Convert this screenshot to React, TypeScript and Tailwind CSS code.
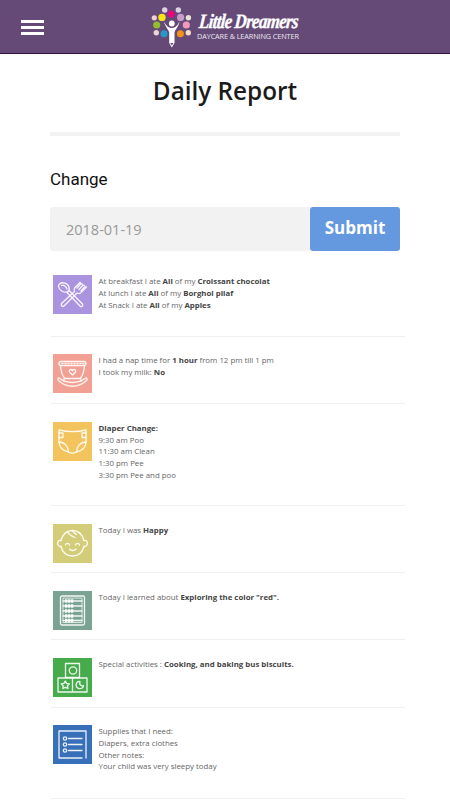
import type { ReactNode } from "react";

interface ReportRowProps {
  tile: string;
  height: string;
  icon: ReactNode;
  children: ReactNode;
}

function ReportRow({ tile, height, icon, children }: ReportRowProps) {
  return (
    <section
      className={`flex items-start gap-[6.5px] border-b border-[#f0f0f0] pl-[2px] pt-[17.5px] ${height}`}
    >
      <div className={`h-[39px] w-[39px] shrink-0 ${tile}`}>
        <svg
          viewBox="0 0 39 39"
          className="h-full w-full"
          fill="none"
          stroke="white"
          strokeOpacity="0.9"
          strokeWidth="1.3"
          strokeLinecap="round"
          strokeLinejoin="round"
        >
          {icon}
        </svg>
      </div>
      <div className="whitespace-nowrap pt-[1px] text-[7.85px] leading-[11.75px] text-[#666] [&_b]:font-bold [&_b]:text-[#444]">
        {children}
      </div>
    </section>
  );
}

function Logo() {
  return (
    <div className="flex text-white">
      <svg viewBox="0 0 50 53" className="h-[53px] w-[50px]" role="img">
        <circle cx="19.7" cy="10" r="2.7" fill="#dfd0e2" />
        <circle cx="33.3" cy="10" r="2.7" fill="#d9d4e0" />
        <circle cx="26.3" cy="14" r="3.6" fill="#e5097f" />
        <circle cx="17" cy="17.4" r="3.7" fill="#f9e414" />
        <circle cx="35.6" cy="17.4" r="3.6" fill="#c89bc8" />
        <circle cx="9.3" cy="17.8" r="2.6" fill="#f0cfd5" />
        <circle cx="43.4" cy="17.8" r="2.7" fill="#e8e4d3" />
        <circle cx="11.7" cy="25" r="3.6" fill="#93bd2b" />
        <circle cx="41.3" cy="25" r="3.6" fill="#f19abb" />
        <circle cx="11.3" cy="32.7" r="2.7" fill="#efd3d5" />
        <circle cx="19" cy="33.7" r="3.5" fill="#2799c9" />
        <circle cx="35.4" cy="33.7" r="3.5" fill="#f39313" />
        <circle cx="43.3" cy="32.7" r="2.7" fill="#f4dfc7" />
        <circle cx="26.8" cy="23.5" r="2.9" fill="white" />
        <path
          d="M19 21.5 C21 26 24 28 26.8 28 C29.5 28 32.5 26 34.5 21.5 C33.8 27 30 29.5 29.5 32.5 V43 L26.8 47.5 L24.2 43 V32.5 C23.7 29.5 20 27 19 21.5Z"
          fill="white"
        />
        <path d="M25.2 43 h3.3 l-1.7 2.5Z" fill="#654a78" />
      </svg>
      <div className="flex w-[106px] flex-col pl-[2px] pt-[13px]">
        <div className="flex h-[18px] origin-left -skew-x-6 scale-y-[1.2] items-center gap-[3px] whitespace-nowrap pl-[2px] font-['Liberation_Serif',serif] text-[17px] font-bold italic leading-[18px] tracking-[-0.7px] [-webkit-text-stroke:0.3px_white]">
          <span>Little</span>
          <span>Dreamers</span>
        </div>
        <div className="whitespace-nowrap font-['Open_Sans',sans-serif] text-[7.3px] leading-[10px] tracking-[-0.12px] text-[#eee8f2]">
          DAYCARE &amp; LEARNING CENTER
        </div>
      </div>
    </div>
  );
}

const cutlery = (
  <>
    <path d="M6.5 9 C9 6.5 15 8 16 12 C16.8 14.5 16 16 14.5 17 C10.5 18 6 15 5.5 11.5 C5.3 10.5 5.8 9.7 6.5 9Z" />
    <path d="M8.5 10.5 C10.5 9.5 13.5 11.5 14 14 M16 15.5 L29.5 29 C30.5 31 28.5 32.5 27 31 L14 17.5" />
    <path d="M27 7.5 L22 12.5 C20.8 14 21 15.5 21.5 16.5 L8.5 28.5 C7.5 30.5 9.5 32.5 11.5 30.5 L24 18 C26 19 27.5 18.5 28.5 17 L33.5 12" />
    <path d="M27 7.5 L28 8.5 L24 13 M29 9 L30 10 L26 14.5 M31 10.5 L32 11.5 L28 16" />
  </>
);

const cradle = (
  <>
    <rect x="6" y="7.5" width="27" height="4" rx="2" />
    <path d="M9 9.5 H31" strokeDasharray="1 2" />
    <path d="M7.5 12 C8 17 9 22 12 24.5 H27 C30 22 31 17 31.5 12" />
    <path d="M6 24 C4.5 24 4.5 26 6 27 C14 34 25 34 33 27 C34.5 26 34.5 24 33 24 C25 30 14 30 6 24Z" />
    <path d="M11 25 V27 M28 25 V27" />
    <path d="M19.5 21 L16.5 18 C15.5 15.5 18.5 14.5 19.5 16.8 C20.5 14.5 23.5 15.5 22.5 18Z" />
  </>
);

const diaper = (
  <>
    <path d="M6 8 C14 10 25 10 33 8 V20 C27 20 23.5 25 23.5 30 C21 31.5 18 31.5 15.5 30 C15.5 25 12 20 6 20Z" />
    <path d="M6 11 H10 V15.5 H6 M33 11 H29 V15.5 H33" />
    <path d="M6 20 C6.5 25 10 29 15.5 30 M33 20 C32.5 25 29 29 23.5 30" />
  </>
);

const baby = (
  <>
    <path d="M8 16.5 C10 9.5 14 6.5 19.5 6.5 C25 6.5 29 9.5 31 16.5 M8 22.5 C9.5 28.5 14 32 19.5 32 C25 32 29.5 28.5 31 22.5" />
    <path d="M8 16.5 C3.5 15.5 3.5 23 8 22.5 M31 16.5 C35.5 15.5 35.5 23 31 22.5" />
    <path d="M14.5 7.5 C15.5 10.5 18.5 12 22 13.5 M19.5 6.8 C20.5 9 21.5 9.5 23.5 10.3" />
    <path d="M12.5 21 C13 18.7 16 18.7 16.5 21 M22.5 21 C23 18.7 26 18.7 26.5 21 M16.5 25 C18 27 21.5 27 23 25" />
  </>
);

const abacus = (
  <>
    <rect x="7.5" y="5" width="24" height="29" rx="1.5" />
    <path d="M10 7.5 V31.5 H29 V7.5Z" strokeWidth="0.8" />
    <path d="M10 10 H29 M10 15 H29 M10 20 H29 M10 25 H29 M10 29.5 H29" />
    <path
      d="M12 10 H21 M12 15 H21 M12 20 H21 M12 25 H21 M12 29.5 H21"
      strokeWidth="3.4"
      strokeDasharray="2.3 0.7"
      strokeLinecap="butt"
    />
  </>
);

const blocks = (
  <>
    <rect x="12.5" y="5.5" width="14" height="14" />
    <path d="M5 20 H19.5 V34 H5Z M19.5 20 H34 V34 H19.5Z" />
    <circle cx="20" cy="12.5" r="3.7" />
    <path d="M12.3 23 L13.6 25.4 L16.4 25.8 L14.4 27.7 L14.9 30.5 L12.3 29.3 L9.8 30.5 L10.2 27.7 L8.2 25.8 L11 25.4Z" />
    <path d="M27 23.5 C22.5 23 21.7 29.5 26 30.5 C28.5 31 30.5 29.5 30.5 27.5 C28 28.5 26 26.5 27 23.5Z" />
  </>
);

const checklist = (
  <>
    <path d="M33 33.5 V6 H6 V33 H29.5" strokeLinecap="butt" />
    <circle cx="12" cy="13.5" r="1.7" />
    <circle cx="12" cy="19.5" r="1.7" />
    <circle cx="12" cy="25.5" r="1.7" />
    <path d="M15.5 13.5 H29 M15.5 19.5 H29 M15.5 25.5 H29" />
  </>
);

export default function App() {
  return (
    <div className="h-[800px] w-[450px] overflow-hidden bg-white font-['Open_Sans','Noto_Sans',sans-serif]">
      <header className="flex h-[54px] items-start border-b border-[#2f1245] bg-[#654a78]">
        <button
          type="button"
          aria-label="Menu"
          className="ml-[21px] mt-[20px] flex w-[23px] flex-col gap-[3px]"
        >
          <span className="h-[3px] bg-white" />
          <span className="h-[2.5px] bg-white" />
          <span className="h-[3px] bg-white" />
        </button>
        <div className="ml-[101px]">
          <Logo />
        </div>
      </header>

      <main>
        <div className="mx-[50px]">
          <h1 className="h-[82px] border-b-4 border-[#f2f2f2] pt-[20px] text-center text-[24.3px] font-semibold leading-[34px] text-[#1b1b1b]">
            Daily Report
          </h1>
          <label
            htmlFor="date"
            className="block pt-[31px] font-['Roboto',sans-serif] text-[17px] leading-[24px] text-[#111]"
          >
            Change
          </label>
          <form className="mt-[16px] flex h-[44px]">
            <input
              id="date"
              readOnly
              value="2018-01-19"
              className="w-[260px] rounded-l-[3px] bg-[#f2f2f2] pl-[16px] pt-[2px] text-[14.5px] text-[#999] outline-none"
            />
            <button
              type="button"
              className="w-[90px] rounded-[3px] bg-[#6499e0] pb-[3px] text-[17px] font-bold text-white"
            >
              Submit
            </button>
          </form>
        </div>

        <div className="ml-[51px] mt-[6.8px] w-[354px]">
          <ReportRow tile="bg-[#ab94df]" height="h-[79px]" icon={cutlery}>
            <p>At breakfast I ate <b>All</b> of my <b>Croissant chocolat</b></p>
            <p>At lunch I ate <b>All</b> of my <b>Borghol pilaf</b></p>
            <p>At Snack I ate <b>All</b> of my <b>Apples</b></p>
          </ReportRow>
          <ReportRow tile="bg-[#f3a094]" height="h-[67.5px]" icon={cradle}>
            <p>I had a nap time for <b>1 hour</b> from 12 pm till 1 pm</p>
            <p>I took my milk: <b>No</b></p>
          </ReportRow>
          <ReportRow tile="bg-[#f3c45e]" height="h-[102px]" icon={diaper}>
            <p><b>Diaper Change:</b></p>
            <p>9:30 am Poo</p>
            <p>11:30 am Clean</p>
            <p>1:30 pm Pee</p>
            <p>3:30 pm Pee and poo</p>
          </ReportRow>
          <ReportRow tile="bg-[#d3cc78]" height="h-[67px]" icon={baby}>
            <p>Today I was <b>Happy</b></p>
          </ReportRow>
          <ReportRow tile="bg-[#7aa393]" height="h-[67px]" icon={abacus}>
            <p>Today I learned about <b>Exploring the color "red".</b></p>
          </ReportRow>
          <ReportRow tile="bg-[#46ab4b]" height="h-[67.3px]" icon={blocks}>
            <p>Special activities : <b>Cooking, and baking bus biscuits.</b></p>
          </ReportRow>
          <ReportRow tile="bg-[#376fb8]" height="h-[91px]" icon={checklist}>
            <p>Supplies that I need:</p>
            <p>Diapers, extra clothes</p>
            <p>Other notes:</p>
            <p>Your child was very sleepy today</p>
          </ReportRow>
        </div>
      </main>
    </div>
  );
}
